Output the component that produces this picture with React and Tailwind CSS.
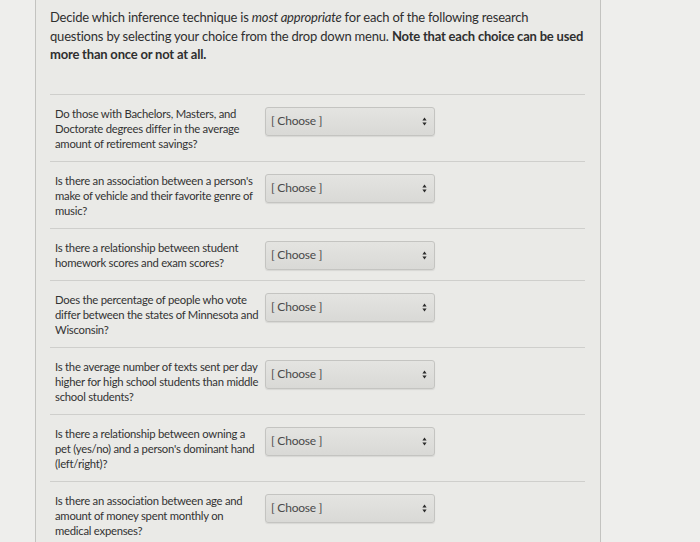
const questions = [
  "Do those with Bachelors, Masters, and Doctorate degrees differ in the average amount of retirement savings?",
  "Is there an association between a person's make of vehicle and their favorite genre of music?",
  "Is there a relationship between student homework scores and exam scores?",
  "Does the percentage of people who vote differ between the states of Minnesota and Wisconsin?",
  "Is the average number of texts sent per day higher for high school students than middle school students?",
  "Is there a relationship between owning a pet (yes/no) and a person's dominant hand (left/right)?",
  "Is there an association between age and amount of money spent monthly on medical expenses?",
];

function SelectArrows() {
  return (
    <svg width="5" height="9" viewBox="0 0 5 9" className="text-[#2b2b2b]">
      <path d="M2.5 0.5 L4.6 3.6 L0.4 3.6 Z" fill="currentColor" />
      <path d="M2.5 8.5 L4.6 5.4 L0.4 5.4 Z" fill="currentColor" />
    </svg>
  );
}

function ChooseBox() {
  return (
    <div className="mt-[1px] w-[170px] h-[29px] shrink-0 rounded-[3px] border border-[#c4c4c1] bg-gradient-to-b from-[#e4e4e1] to-[#d9d9d6] shadow-[0_1px_1px_rgba(0,0,0,0.08)] flex items-center justify-between pl-[5px] pr-[7px]">
      <span className="text-[12px] tracking-[-0.2px] text-[#4a4a4a]">[ Choose ]</span>
      <SelectArrows />
    </div>
  );
}

export default function App() {
  return (
    <div className="w-full h-[542px] overflow-hidden bg-[#eeeeec] pl-[35px] font-['Lato','Noto_Sans',sans-serif]">
      <div className="w-[566px] h-full border-l border-r border-[#c3c3c0] bg-[#eaeae7] pl-[14px] pr-[15px]">
        <p className="pt-[8px] pb-[30px] text-[13px] leading-[18.5px] tracking-[-0.2px] text-[#2f2f2f] -mr-[25px]">
          Decide which inference technique is <em>most appropriate</em> for each of the following research
          <br />
          questions by selecting your choice from the drop down menu.{" "}
          <strong className="font-bold">Note that each choice can be used more than once or not at all.</strong>
        </p>

        {questions.map((q, i) => (
          <div key={i} className="border-t border-[#cfcfcc] pt-[11px] pb-[10px] pl-[5px] flex items-start gap-[3px]">
            <p className="w-[207px] text-[11.3px] leading-[15px] tracking-[-0.25px] text-[#333]">{q}</p>
            <ChooseBox />
          </div>
        ))}
      </div>
    </div>
  );
}
